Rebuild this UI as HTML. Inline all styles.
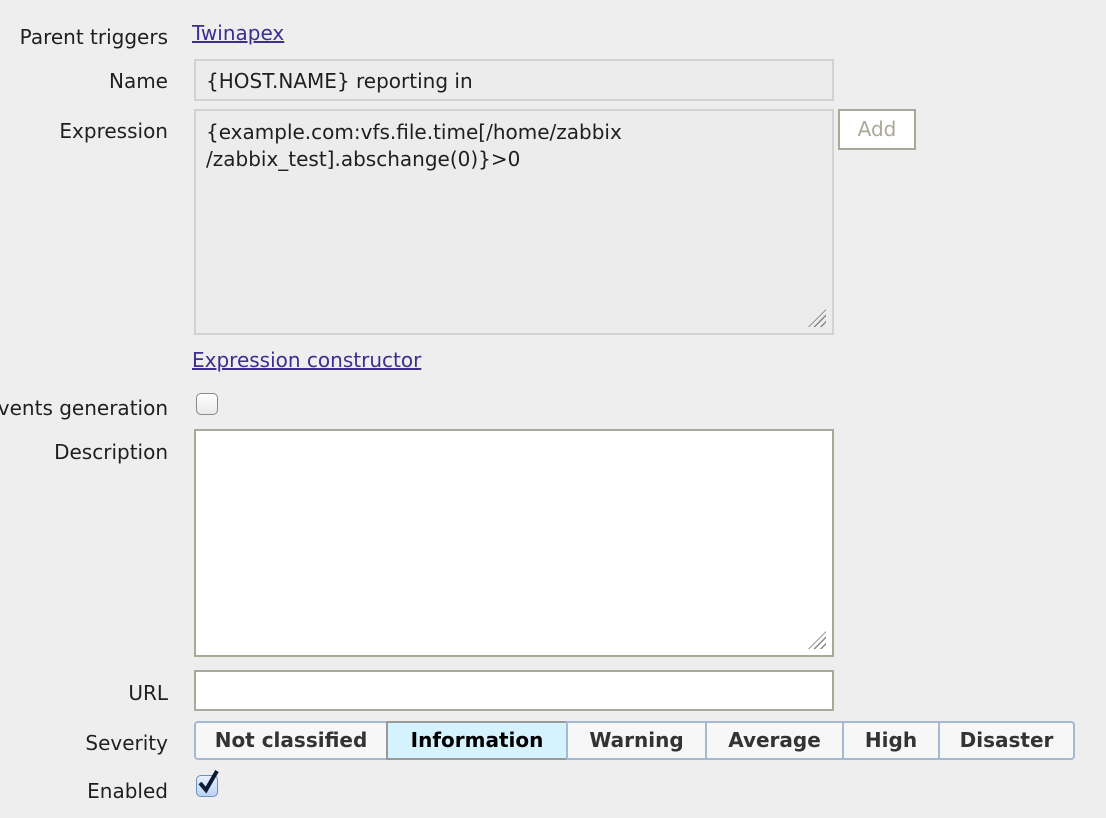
<!DOCTYPE html>
<html><head><style>
body{margin:0;width:1106px;height:818px;background:#eeeeee;font-family:"DejaVu Sans","Liberation Sans",sans-serif;font-size:20px;color:#1f1f1f;position:relative;overflow:hidden}
.l{position:absolute;left:0;width:168px;overflow:hidden;white-space:nowrap;direction:rtl;text-align:right}
.a{position:absolute;color:#3b2f8f;text-decoration:underline}
.box{position:absolute;left:194px;width:640px;box-sizing:border-box}
.sev{position:absolute;top:721px;height:39px;box-sizing:border-box;border:2px solid #a5b9d2;background:#f7f7f7;font-weight:bold;color:#333;text-align:center;line-height:35px}
.grip{position:absolute;right:6px;bottom:6px;width:18px;height:18px;background:repeating-linear-gradient(135deg,transparent 0 3px,#888 3px 4.5px);clip-path:polygon(100% 0,100% 100%,0 100%)}
</style></head><body>
<div class="l" style="top:25px">Parent triggers</div>
<div class="a" style="left:192px;top:21px">Twinapex</div>
<div class="l" style="top:69px">Name</div>
<div class="box" style="top:59px;height:42px;background:#ececec;border:2px solid #d2d2d2;padding:8px 10px">{HOST.NAME} reporting in</div>
<div class="l" style="top:119px">Expression</div>
<div class="box" style="top:109px;height:226px;background:#ececec;border:2px solid #d2d2d2;padding:8px 10px;line-height:27px">{example.com:vfs.file.time[/home/zabbix<br>/zabbix_test].abschange(0)}&gt;0<div class="grip"></div></div>
<div style="position:absolute;left:838px;top:109px;width:78px;height:41px;box-sizing:border-box;border:2px solid #aaa898;background:#fff;color:#aaa898;text-align:center;line-height:37px">Add</div>
<div class="a" style="left:192px;top:348px">Expression constructor</div>
<div class="l" style="top:396px"><span dir="ltr">Multiple PROBLEM events generation</span></div>
<div style="position:absolute;left:196px;top:393px;width:22px;height:22px;box-sizing:border-box;border:1px solid #8a8a8a;border-radius:5px;background:linear-gradient(#fff,#e8e8e8)"></div>
<div class="l" style="top:440px">Description</div>
<div class="box" style="top:429px;height:228px;background:#fff;border:2px solid #aaa898"><div class="grip"></div></div>
<div class="l" style="top:681px">URL</div>
<div class="box" style="top:670px;height:41px;background:#fff;border:2px solid #aaa898"></div>
<div class="l" style="top:731px">Severity</div>
<div class="sev" style="left:194px;width:194px;border-radius:4px 0 0 4px">Not classified</div>
<div class="sev" style="left:386px;width:182px;background:#d5f3ff;border-color:#999;color:#000">Information</div>
<div class="sev" style="left:566px;width:141px">Warning</div>
<div class="sev" style="left:705px;width:139px">Average</div>
<div class="sev" style="left:842px;width:98px">High</div>
<div class="sev" style="left:938px;width:137px;border-radius:0 4px 4px 0">Disaster</div>
<div class="l" style="top:779px">Enabled</div>
<div style="position:absolute;left:196px;top:775px;width:22px;height:22px;box-sizing:border-box;border:1px solid #6e8fb8;border-radius:5px;background:linear-gradient(#e8f2ff,#b9d3f2)"></div>
<svg style="position:absolute;left:196px;top:768px" width="26" height="28"><path d="M4 15 L10 22 L21 3" stroke="#0d1a33" stroke-width="4" fill="none"/></svg>
</body></html>
